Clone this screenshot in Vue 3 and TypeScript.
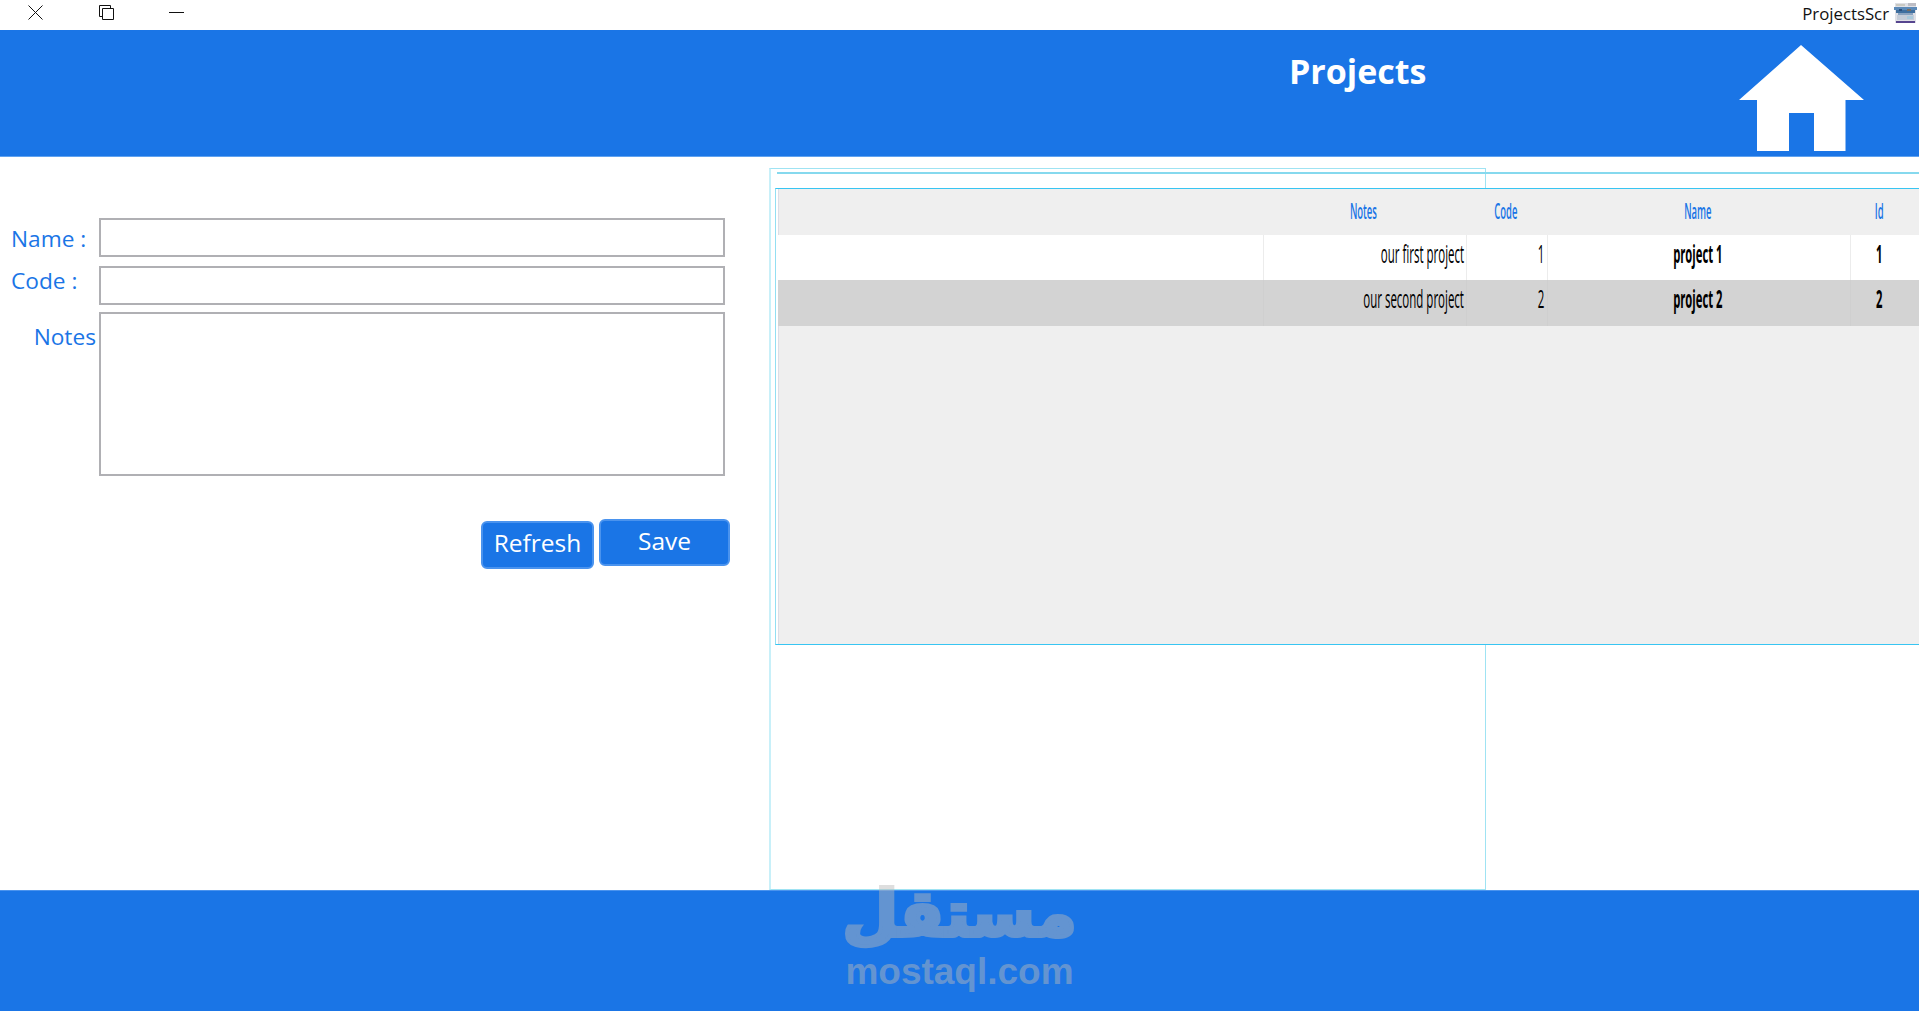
<script setup lang="ts">
interface ProjectRow {
  id: number
  name: string
  code: number
  notes: string
}

const rows: ProjectRow[] = [
  { id: 1, name: 'project 1', code: 1, notes: 'our first project' },
  { id: 2, name: 'project 2', code: 2, notes: 'our second project' }
]
</script>

<template>
  <div class="page">
    <div class="titlebar">
      <div class="win-btns">
        <svg class="win-icon" viewBox="0 0 15 15"><path d="M0.5 0.5 14.5 14.5M14.5 0.5 0.5 14.5" fill="none" stroke="#111" stroke-width="1" /></svg>
        <svg class="win-icon" viewBox="0 0 15 15"><path d="M3.5 3.5H14.5V14.5H3.500ZM3.5 11.5H0.5V0.5H11.5V3.5" fill="none" stroke="#111" stroke-width="1" /></svg>
        <svg class="win-icon" viewBox="0 0 15 15"><path d="M0 7.5H15" fill="none" stroke="#111" stroke-width="1" /></svg>
      </div>
      <div class="app-name">
        <span>ProjectsScr</span>
        <svg class="app-icon" viewBox="0 0 23 20">
          <rect x="1" y="0" width="21" height="20" fill="#dfe0e6" />
          <rect x="2" y="1" width="9" height="2" fill="#c9c9c2" />
          <rect x="14" y="0" width="8" height="3" fill="#bdbdc4" />
          <rect x="0" y="4" width="23" height="3" fill="#5c8ab8" />
          <rect x="2" y="7" width="19" height="3" fill="#3f6f9f" />
          <rect x="5" y="6" width="3" height="2" fill="#2c4f7c" />
          <rect x="13" y="6" width="4" height="2" fill="#7b6d5e" />
          <rect x="4" y="10" width="15" height="2" fill="#8aa3c0" />
          <rect x="3" y="12" width="17" height="5" fill="#c4ccd8" />
          <rect x="13" y="13" width="6" height="3" fill="#a9c9dc" />
          <rect x="2" y="18" width="19" height="2" fill="#56458f" />
        </svg>
      </div>
    </div>

    <header class="header">
      <h1 class="title">Projects</h1>
      <svg class="home" viewBox="0 0 125 106"><path d="M62 0 125 55H106.500V106H75V68H50V106H18V55H0Z" fill="#fff" /></svg>
    </header>

    <main class="main">
      <form class="form" @submit.prevent>
        <div class="field first">
          <label class="lbl lbl-name" for="name">Name :</label>
          <input id="name" class="box" type="text" />
        </div>
        <div class="field">
          <label class="lbl lbl-code" for="code">Code :</label>
          <input id="code" class="box" type="text" />
        </div>
        <div class="field">
          <label class="lbl lbl-notes" for="notes">Notes</label>
          <textarea id="notes" class="box area"></textarea>
        </div>
        <div class="actions">
          <button class="btn refresh" type="button">Refresh</button>
          <button class="btn save" type="button">Save</button>
        </div>
      </form>

      <section class="panel">
        <div class="frame">
          <div class="frame-line"></div>
          <div class="grid-box">
            <div class="grid">
              <div class="row head">
                <div></div>
                <div class="cell center"><span class="sq sq-head">Notes</span></div>
                <div class="cell center"><span class="sq sq-head">Code</span></div>
                <div class="cell center"><span class="sq sq-head">Name</span></div>
                <div class="cell center"><span class="sq sq-head">Id</span></div>
              </div>
              <div v-for="(row, i) in rows" :key="row.id" class="row item" :class="{ alt: i % 2 === 1 }">
                <div class="cell"></div>
                <div class="cell end notes"><span class="sq sq-end">{{ row.notes }}</span></div>
                <div class="cell end code"><span class="sq sq-end">{{ row.code }}</span></div>
                <div class="cell center"><span class="sq sq-bold">{{ row.name }}</span></div>
                <div class="cell center"><span class="sq sq-bold">{{ row.id }}</span></div>
              </div>
            </div>
          </div>
        </div>
      </section>
    </main>

    <footer class="footer">
      <div class="logo">
        <div class="logo-ar">مستقل</div>
        <div class="logo-en">mostaql.com</div>
      </div>
    </footer>
  </div>
</template>

<style>
html,
body {
  margin: 0;
  overflow: hidden;
}
</style>

<style scoped>
.page {
  width: 1919px;
  height: 1011px;
  display: flex;
  flex-direction: column;
  overflow: hidden;
  background: #fff;
  font-family: "Open Sans", "Noto Sans", sans-serif;
}

.titlebar {
  height: 30px;
  display: flex;
  justify-content: space-between;
  align-items: center;
  flex-shrink: 0;
}

.win-btns {
  display: flex;
  gap: 56px;
  padding-left: 28px;
}

.win-icon {
  width: 15px;
  height: 15px;
  display: block;
  margin-bottom: 5px;
}

.win-btns .win-icon:nth-child(3) {
  margin-left: -1px;
}

.app-name {
  display: flex;
  align-items: center;
  gap: 5px;
  font-size: 16.8px;
  color: #111;
  padding-right: 2px;
  margin-bottom: 4px;
}

.app-icon {
  width: 23px;
  height: 20px;
}

.header {
  height: 127px;
  flex-shrink: 0;
  box-sizing: border-box;
  background: #1a75e6;
  border-bottom: 1px solid #5fa2f0;
  display: flex;
  justify-content: space-between;
  padding: 20px 55px 5px 1289px;
}

.title {
  margin: 0;
  font-size: 34px;
  line-height: 42px;
  font-weight: 700;
  color: #fff;
}

.home {
  width: 125px;
  height: 106px;
  align-self: flex-end;
}

.main {
  flex: 1;
  display: flex;
  min-height: 0;
}

.form {
  width: 769px;
  flex-shrink: 0;
  box-sizing: border-box;
  padding: 61px 0 0 0;
  display: flex;
  flex-direction: column;
  gap: 7px;
}

.field {
  display: flex;
  width: 725px;
}

.first {
  margin-bottom: 1px;
}

.lbl {
  width: 99px;
  flex-shrink: 0;
  box-sizing: border-box;
  padding: 0 0 0 11px;
  font-size: 22.7px;
  line-height: 39px;
  color: #1a75e6;
  white-space: nowrap;
}

.lbl-name {
  padding-top: 1px;
}

.lbl-code {
  margin-top: -5px;
}

.lbl-notes {
  padding: 5px 3px 0 0;
  text-align: right;
}

.box {
  flex: 1;
  height: 39px;
  box-sizing: border-box;
  border: 2px solid #b0b0b4;
  border-radius: 0;
  background: #fff;
  outline: none;
  padding: 0;
  margin: 0;
  display: block;
}

.area {
  height: 164px;
  resize: none;
}

.actions {
  width: 730px;
  margin-top: 36px;
  display: flex;
  justify-content: flex-end;
  align-items: flex-start;
  gap: 5px;
}

.btn {
  box-sizing: border-box;
  background: #1a75e6;
  color: #fff;
  border: 2px solid #4a93ee;
  border-radius: 6px;
  font-family: inherit;
  font-size: 24.5px;
  padding: 0;
}

.refresh {
  width: 113px;
  height: 48px;
  margin-top: 2px;
  padding-bottom: 5px;
}

.save {
  width: 131px;
  height: 47px;
  padding-bottom: 4px;
}

.panel {
  flex: 1;
  min-width: 0;
  padding-top: 11px;
}

.frame {
  width: 717px;
  height: 722px;
  box-sizing: border-box;
  border: 1px solid #9fe3f3;
  border-left: 2px solid #c8f0f9;
  padding: 3px 0 0 4px;
}

.frame-line {
  margin-left: 2px;
  width: 1150px;
  height: 2px;
  background: #86d9ee;
}

.grid-box {
  margin-top: 14px;
  width: 1150px;
  height: 457px;
  box-sizing: border-box;
  border: 1px solid #38c5f2;
  border-left-color: #93dff2;
  padding-left: 2px;
  background: #fff;
}

.grid {
  height: 100%;
  background: #efefef;
  border-left: 1px solid #dddde6;
}

.row {
  display: grid;
  grid-template-columns: 485px 203px 81px 303px 60px;
  margin-left: -1px;
}

.head {
  height: 46px;
  padding-bottom: 4px;
  box-sizing: border-box;
}

.item {
  height: 45px;
  background: #fff;
}

.item.alt {
  height: 46px;
  background: #d3d3d3;
}

.item .cell {
  border-left: 1px solid #ececec;
  padding-bottom: 9px;
}

.item.alt .cell {
  border-left-color: #cfcfcf;
  padding-bottom: 11px;
}

.item .cell:first-child {
  border-left: 0;
}

.cell {
  display: flex;
  align-items: center;
  box-sizing: border-box;
  min-width: 0;
  white-space: nowrap;
}

.center {
  justify-content: center;
  padding-right: 2px;
}

.end {
  justify-content: flex-end;
}

.item .notes {
  padding-right: 2px;
}

.item .code {
  padding-right: 3px;
}

.sq {
  display: inline-block;
  flex-shrink: 0;
}

.sq-head {
  font-size: 22px;
  font-weight: 600;
  color: #1a75e6;
  transform: scaleX(0.43);
}

.sq-end {
  font-size: 25px;
  color: #000;
  transform: scaleX(0.46);
  transform-origin: right center;
}

.sq-bold {
  font-size: 25px;
  font-weight: 700;
  color: #000;
  transform: scaleX(0.45);
}

.footer {
  height: 121px;
  flex-shrink: 0;
  box-sizing: border-box;
  background: #1a75e6;
  border-top: 1px solid #4a93ee;
  display: flex;
  justify-content: center;
}

.logo {
  margin-top: -12px;
  width: 229px;
  height: 120px;
  text-align: center;
  color: rgb(185, 185, 185);
  opacity: 0.46;
  font-weight: 700;
}

.logo-ar {
  display: flex;
  justify-content: center;
  font-family: "DejaVu Sans", sans-serif;
  font-size: 64px;
  line-height: 71px;
  white-space: nowrap;
  -webkit-text-stroke: 4px rgb(185, 185, 185);
}

.logo-en {
  font-family: "Liberation Sans", sans-serif;
  font-size: 37px;
  line-height: 42px;
  margin-top: 1px;
  white-space: nowrap;
}
</style>
